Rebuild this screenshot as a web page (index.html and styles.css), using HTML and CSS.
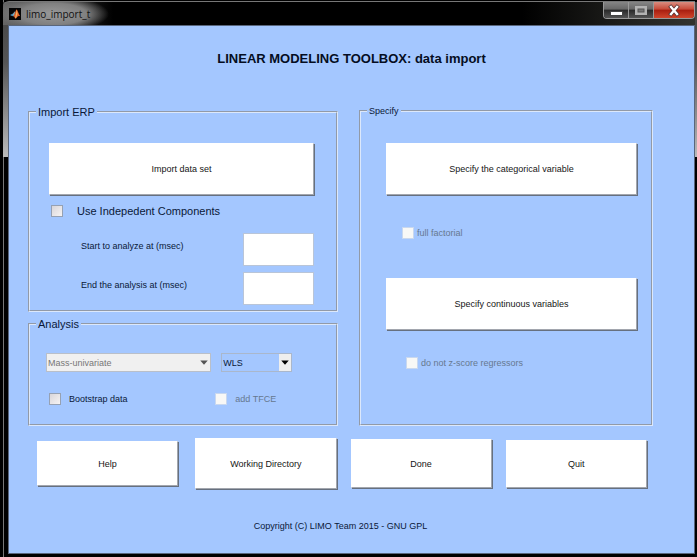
FILE: index.html
```html
<!DOCTYPE html>
<html lang="en">
<head>
<meta charset="utf-8">
<title>limo_import_t</title>
<link rel="stylesheet" href="styles.css">
</head>
<body>
<div class="window">
  <header class="titlebar">
    <svg class="logo" viewBox="0 0 12 12" aria-hidden="true">
      <rect width="12" height="12" fill="#050505"/>
      <path d="M1 7 4 5.5 5.5 6.5 4.2 8.3 3 8z" fill="#4a8fb8"/>
      <path d="M4 5.5 6 3.2 5.8 6.4 4.2 8.3z" fill="#8fb0bb"/>
      <path d="M5.5 6.5C6.3 4 7 1.5 7.7 1.6 8.6 2 9.6 6 11.2 8.2 9.8 7.6 9 7.8 8 9.2 7.4 10.2 6.6 10.6 6 10.6 5.7 9 5 8.4 4.2 8.3z" fill="#e0602a"/>
      <path d="M7.7 1.6C7.4 4 6.8 7 6 10.6 7.4 9.6 8 7.5 8.5 5.5z" fill="#f6b45c"/>
    </svg>
    <span class="caption">limo_import_t</span>
    <div class="controls">
      <button type="button" class="control" aria-label="Minimize">
        <svg width="24" height="16" viewBox="0 0 24 16"><rect x="6.500" y="9.500" width="12" height="4" fill="#fff" stroke="#444"/></svg>
      </button>
      <button type="button" class="control" aria-label="Maximize">
        <svg width="24" height="16" viewBox="0 0 24 16"><rect x="6" y="4" width="12" height="9" fill="#b3b3b3"/><rect x="9" y="7" width="6" height="3" fill="#777" stroke="#555"/></svg>
      </button>
      <button type="button" class="control control-close" aria-label="Close">
        <svg width="40" height="16" viewBox="0 0 40 16"><path d="M17 5 23 12M23 5 17 12" stroke="#533" stroke-width="4" stroke-linecap="square"/><path d="M17 5 23 12M23 5 17 12" stroke="#fff" stroke-width="2.400" stroke-linecap="square"/></svg>
      </button>
    </div>
  </header>
  <main class="client">
    <h1 class="title">LINEAR MODELING TOOLBOX: data import</h1>
    <div class="content">
      <div class="panels">
        <div class="column">
          <fieldset class="panel">
            <legend class="legend">Import ERP</legend>
            <div class="import-body">
              <button type="button" class="push push-large">Import data set</button>
              <label class="check check-components"><input type="checkbox" class="box">Use Indepedent Components</label>
              <div class="field"><label for="start">Start to analyze at (msec)</label><input type="text" id="start" class="entry"></div>
              <div class="field"><label for="end">End the analysis at (msec)</label><input type="text" id="end" class="entry"></div>
            </div>
          </fieldset>
          <fieldset class="panel">
            <legend class="legend">Analysis</legend>
            <div class="analysis-body">
              <div class="picker picker-off">
                <select aria-label="Analysis type" disabled><option>Mass-univariate</option></select>
                <svg class="arrow" viewBox="0 0 11 16" aria-hidden="true"><path d="M2 6h7L5.500 10z"/></svg>
              </div>
              <div class="picker">
                <select aria-label="Method"><option>WLS</option></select>
                <svg class="arrow" viewBox="0 0 11 16" aria-hidden="true"><path d="M2 6h7L5.500 10z"/></svg>
              </div>
              <label class="check check-bootstrap"><input type="checkbox" class="box">Bootstrap data</label>
              <label class="check check-tfce"><input type="checkbox" class="box" disabled>add TFCE</label>
            </div>
          </fieldset>
        </div>
        <fieldset class="panel">
          <legend class="legend legend-small">Specify</legend>
          <div class="specify-body">
            <button type="button" class="push push-large">Specify the categorical variable</button>
            <label class="check check-option"><input type="checkbox" class="box" disabled>full factorial</label>
            <button type="button" class="push push-large">Specify continuous variables</button>
            <label class="check check-option check-zscore"><input type="checkbox" class="box" disabled>do not z-score regressors</label>
          </div>
        </fieldset>
      </div>
      <div class="actions">
        <button type="button" class="push push-help">Help</button>
        <button type="button" class="push push-directory">Working Directory</button>
        <button type="button" class="push push-done">Done</button>
        <button type="button" class="push push-quit">Quit</button>
      </div>
      <p class="copyright">Copyright (C) LIMO Team 2015 - GNU GPL</p>
    </div>
  </main>
</div>
</body>
</html>
```
FILE: styles.css
```css
* { box-sizing: border-box; }

body {
  margin: 0;
  background: #000;
  color: #0a1838;
  font: 9px/14px "Liberation Sans", Arial, sans-serif;
}

button, input, select { font: inherit; color: inherit; }

.window {
  display: flex;
  flex-direction: column;
  min-height: 100vh;
  padding: 1px 2px 3px 3px;
  background:
    linear-gradient(#444, #555 60px, #bbb) left 3px top 2px / 5px 155px no-repeat,
    linear-gradient(#444, #555 60px, #bbb) right top 2px / 2px 155px no-repeat,
    linear-gradient(#777, #777) left 3px top 0 / 1px 100% no-repeat,
    #000;
}

.titlebar {
  display: flex;
  align-items: flex-start;
  height: 24px;
  padding-left: 6px;
  border-top: 1px solid #777;
  border-radius: 6px 0 0;
  background:
    radial-gradient(ellipse 56px 18px at 50px 12px, #999 0, #808080 60%, transparent) no-repeat,
    linear-gradient(90deg, #666 0, #000 110px, #000 75%, #33332f);
}

.logo { flex: none; width: 12px; height: 12px; margin-top: 6px; }

.caption { margin: 5px 0 0 5px; color: #111; font: 10px/14px "Open Sans", sans-serif; }

.controls {
  display: flex;
  height: 17px;
  margin-left: auto;
  border: 1px solid #999;
  border-top: 0;
  border-radius: 0 0 4px 4px;
  overflow: hidden;
}

.control {
  display: flex;
  padding: 0;
  border: 0;
  border-right: 1px solid #999;
  background: linear-gradient(#858585, #686868 45%, #292929 50%, #555);
}

.control-close { border: 0; background: linear-gradient(#d98d80, #c74a38 45%, #a81e10 50%, #d0452c); }

.client {
  flex: 1;
  margin-left: 5px;
  border: 1px solid #59667c;
  background: #a4c7ff;
}

.title { margin: 24px 0 37px; color: #050d22; font-size: 13px; line-height: 18px; text-align: center; }

.content { padding: 0 41px 0 19px; }

.panels { display: grid; grid-template-columns: 310fr 294fr; gap: 21px; }

.column { display: flex; flex-direction: column; gap: 5px; min-width: 0; }

.panel { min-width: 0; margin: 0; padding: 0; border: 2px groove #dce8fb; }

.legend { margin-left: 6px; padding: 0 2px; font-size: 11px; line-height: 14px; }
.legend-small { font-size: 9px; line-height: 12px; }

.push {
  padding: 0;
  border: 1px solid #fff;
  border-right-color: #a2a6ae;
  border-bottom-color: #a2a6ae;
  box-shadow: 1px 1px #66707f;
  background: #fff;
  color: #151515;
}

.push-large { display: block; width: 100%; height: 52px; }

.import-body { padding: 24px 22px 5px 19px; }

.check { display: flex; align-items: center; }

.box {
  flex: none;
  width: 12px;
  height: 12px;
  margin: 0;
  appearance: none;
  border: 1px solid #96a1b3;
  background: linear-gradient(135deg, #d9d6da, #f6f3f3);
}

.box:disabled { border-color: #c9d8ef; background: #f8f8f6; }
.check:has(:disabled) { color: #66788f; }

.check-components { gap: 14px; margin: 9px 0 15px 2px; font-size: 11px; }

.field { display: flex; align-items: flex-start; justify-content: space-between; padding-left: 32px; }
.field + .field { margin-top: 6px; }
.field label { padding-top: 6px; }

.entry { width: 71px; height: 33px; padding: 2px; border: 1px solid #b9c5d8; background: #fff; }

.analysis-body {
  display: grid;
  grid-template-columns: 166fr 71fr;
  gap: 20px 10px;
  padding: 22px 44px 18px 16px;
}

.picker { position: relative; height: 19px; border: 1px solid #aab7cb; }

.picker select {
  width: 100%;
  height: 17px;
  padding: 0 12px 0 1px;
  border: 0;
  appearance: none;
  background: transparent;
  opacity: 1;
}

.picker-off { border-color: #b9bfc9; background: #f0f0f0; color: #777; }

.arrow { position: absolute; top: 0; right: 0; width: 12px; height: 17px; background: #eee; fill: #000; }
.picker-off .arrow { background: transparent; fill: #555; }

.check-bootstrap { gap: 8px; margin-left: 3px; }
.check-tfce { gap: 8px; margin-left: -6px; }

.specify-body { padding: 26px 14px 0 25px; }

.check-option { gap: 3px; margin: 31px 0 38px 16px; }
.check-zscore { margin: 26px 0 0 20px; }

.actions {
  display: grid;
  grid-template-columns: 144fr 141fr 141fr 141fr;
  align-items: center;
  gap: 14px;
  padding: 12px 6px 0 9px;
}

.push-help { height: 45px; margin-right: 3px; }
.push-directory { height: 51px; }
.push-done { height: 49px; }
.push-quit { height: 48px; }

.copyright { margin: 30px 0 15px; text-align: center; }
```
